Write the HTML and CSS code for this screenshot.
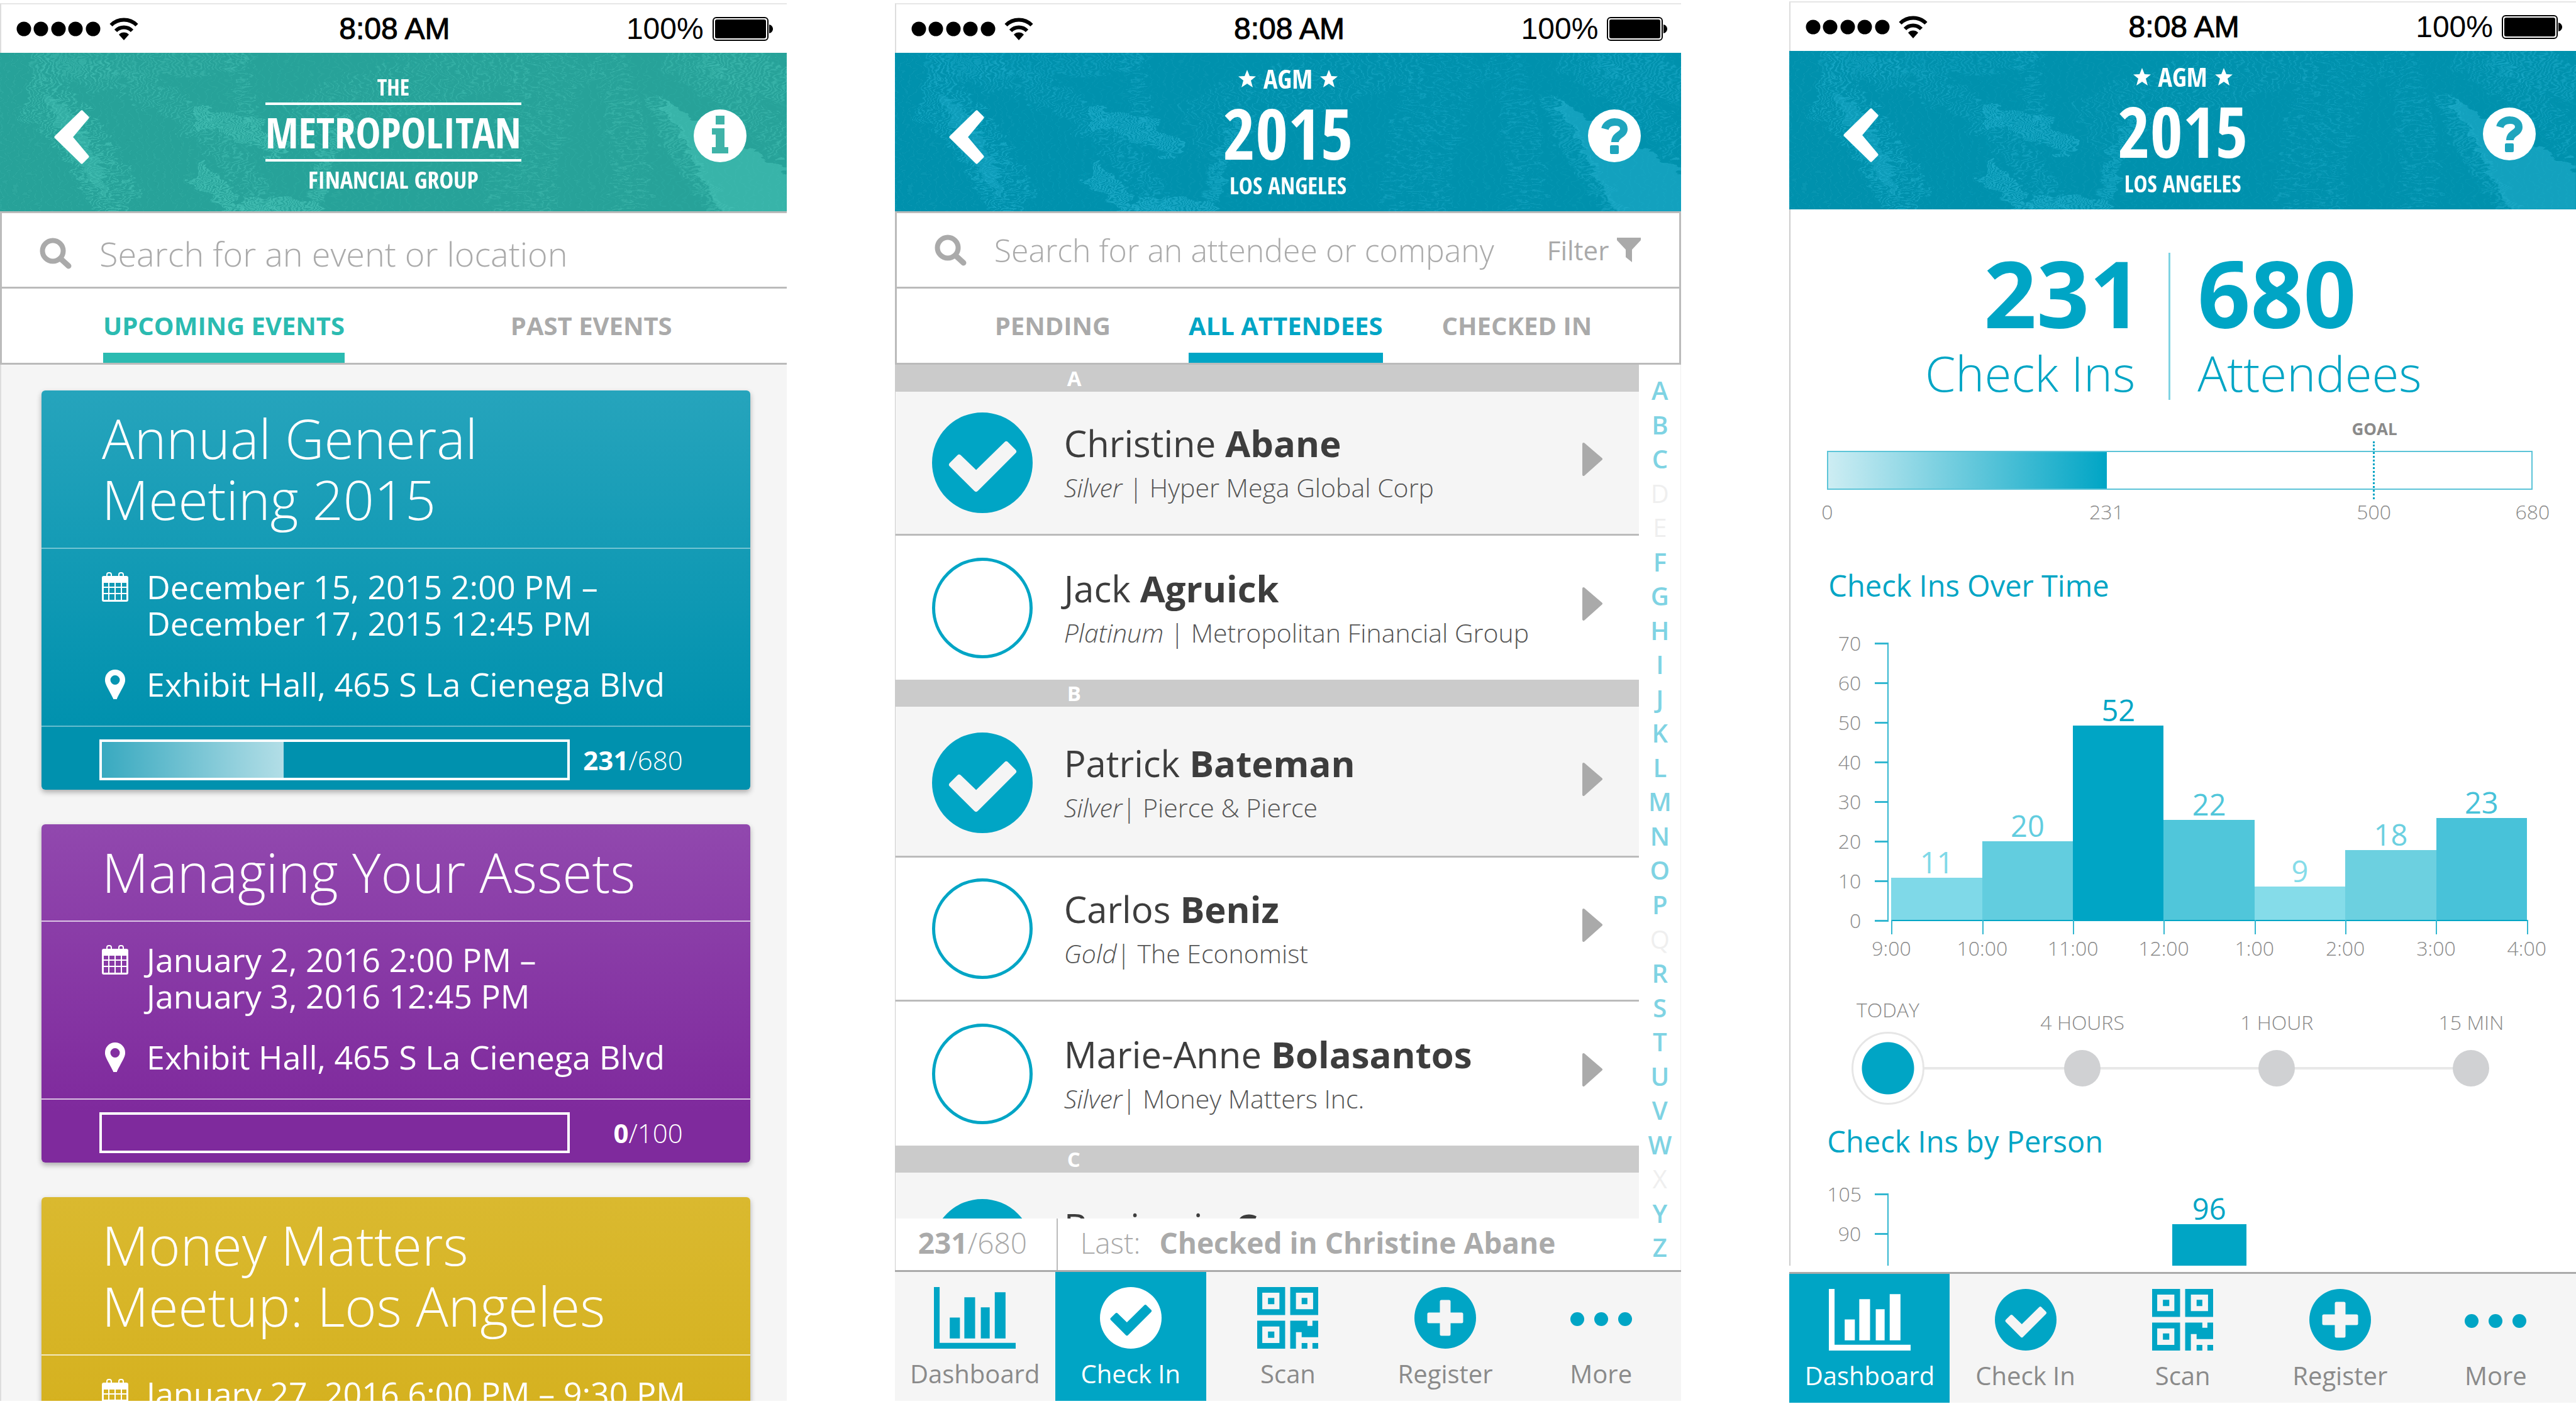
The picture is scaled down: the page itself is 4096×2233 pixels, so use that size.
FILE: index.html
```html
<!DOCTYPE html>
<html lang="en">
<head>
<meta charset="utf-8">
<title>Event check-in</title>
<link rel="stylesheet" href="styles.css">
</head>
<body>
<svg class="sprite" aria-hidden="true">
  <defs>
    <filter id="rough" x="0" y="0" width="100%" height="100%">
      <feTurbulence type="fractalNoise" baseFrequency="0.03 0.09" numOctaves="3" seed="7" result="n"/>
      <feDisplacementMap in="SourceGraphic" in2="n" scale="34" xChannelSelector="R" yChannelSelector="G"/>
    </filter>
  </defs>
  <symbol id="signal" viewBox="0 0 134 24"><circle cx="12" cy="12" r="11.5"/><circle cx="39" cy="12" r="11.5"/><circle cx="67" cy="12" r="11.5"/><circle cx="94" cy="12" r="11.5"/><circle cx="122" cy="12" r="11.5"/></symbol>
  <symbol id="wifi" viewBox="0 0 46 37"><path d="M23 37L15 28a11 11 0 0 1 16 0z"/><path d="M10 22a18 18 0 0 1 26 0" fill="none" stroke="#000" stroke-width="6"/><path d="M2.500 13a29 29 0 0 1 41 0" fill="none" stroke="#000" stroke-width="6"/></symbol>
  <symbol id="battery" viewBox="0 0 96 38"><rect x="1" y="1" width="87" height="36" rx="5" fill="none" stroke="#000" stroke-width="2"/><rect x="4" y="4" width="81" height="30" rx="3"/><path d="M90 12c8 2 8 12 0 14z"/></symbol>
  <symbol id="back" viewBox="0 0 56 86"><path d="M44 3L53 12 27 43 53 74 44 83 3 43z" fill="#fff" stroke="#fff" stroke-width="5" stroke-linejoin="round"/></symbol>
  <symbol id="star" viewBox="0 0 28 28"><path d="M14 0l4 10 10 .5-8 6.500 3 11-9-6-9 6 3-11-8-6.500L10 10z" fill="#fff"/></symbol>
  <symbol id="info" viewBox="0 0 84 84"><circle cx="42" cy="42" r="42" fill="#fff"/><path d="M35 10h14v14H35zM29 30h20v30h6v10H29V60h6V40h-6z" fill="currentColor"/></symbol>
  <symbol id="help" viewBox="0 0 84 84"><circle cx="42" cy="42" r="42" fill="#fff"/><path d="M27 31C31 16 57 17 57 31c0 10-14 9-14 21" fill="none" stroke="currentColor" stroke-width="12"/><rect x="35" y="57" width="14" height="14" rx="2" fill="currentColor"/></symbol>
  <symbol id="search" viewBox="0 0 51 50"><circle cx="21" cy="21" r="16.500" fill="none" stroke="currentColor" stroke-width="8"/><path d="M34 34L46 45" stroke="currentColor" stroke-width="9" stroke-linecap="round"/></symbol>
  <symbol id="funnel" viewBox="0 0 40 40"><path d="M1 0H39V4L25 19V39L15 31V19L1 4z" fill="currentColor"/></symbol>
  <symbol id="calendar" viewBox="0 0 42 47"><path d="M3 6h36a3 3 0 0 1 3 3v35a3 3 0 0 1-3 3H3a3 3 0 0 1-3-3V9a3 3 0 0 1 3-3zM3 17v6h7v-6zM12 17v6h8v-6zM22 17v6h8v-6zM32 17v6h7v-6zM3 25v8h7v-8zM12 25v8h8v-8zM22 25v8h8v-8zM32 25v8h7v-8zM3 35v9h7v-9zM12 35v9h8v-9zM22 35v9h8v-9zM32 35v9h7v-9z" fill="#fff" fill-rule="evenodd"/><rect x="8" y="1" width="7" height="12" rx="3" fill="none" stroke="#fff" stroke-width="2"/><rect x="27" y="1" width="7" height="12" rx="3" fill="none" stroke="#fff" stroke-width="2"/></symbol>
  <symbol id="pin" viewBox="0 0 42 47"><path d="M21 0a16 16 0 0 1 16 17c0 6-4 11-13 29a3 3 0 0 1-6 0C9 28 5 23 5 17A16 16 0 0 1 21 0zm0 9a7.500 7.500 0 1 0 0 15 7.500 7.500 0 0 0 0-15z" fill="#fff" fill-rule="evenodd"/></symbol>
  <symbol id="tick" viewBox="0 0 160 160"><path d="M31 83L43 71 70 97 118 50 130 62 70 122z" fill="currentColor" stroke="currentColor" stroke-width="8" stroke-linejoin="round"/></symbol>
  <symbol id="arrow" viewBox="0 0 32 53"><path d="M2 2L30 26 2 51z" fill="#aaa" stroke="#aaa" stroke-width="4" stroke-linejoin="round"/></symbol>
  <symbol id="bars" viewBox="0 0 129 97"><path d="M0 0h9v88h120v9H0zM25 48h16v33H25zM48 16h17v65H48zM74 32h14v49H74zM96 8h17v73H96z" fill="currentColor"/></symbol>
  <symbol id="check" viewBox="0 0 160 160"><circle cx="80" cy="80" r="80" fill="currentColor"/><path d="M31 83L43 71 70 97 118 50 130 62 70 122z" stroke-width="8" stroke-linejoin="round"/></symbol>
  <symbol id="qr" viewBox="0 0 97 97"><path d="M0 0h44v44H0zM8 9v26h27V9zM17 17h10v10H17zM52 0h44v44H52zM61 9v26h27V9zM70 17h9v10h-9zM0 53h44v44H0zM8 62v26h27V62zM17 70h10v10H17zM52 53h27v8h8v-8h9v26H70v-8h-9v26h-9zM70 88h9v9h-9zM87 88h9v9h-9z" fill="currentColor" fill-rule="evenodd"/></symbol>
  <symbol id="plus" viewBox="0 0 98 98"><circle cx="49" cy="49" r="49" fill="currentColor"/><path d="M43 23h12v20h20v12H55v20H43V55H23V43h20z" stroke-width="5" stroke-linejoin="round"/></symbol>
  <symbol id="dots" viewBox="0 0 98 98"><circle cx="11" cy="51" r="11" fill="currentColor"/><circle cx="49" cy="51" r="11" fill="currentColor"/><circle cx="87" cy="51" r="11" fill="currentColor"/></symbol>
  <symbol id="palms" viewBox="0 0 1250 252" preserveAspectRatio="none">
    <g fill="none" stroke="currentColor" filter="url(#rough)">
      <path d="M0 126H1250" stroke-width="252" stroke-dasharray="2 11" opacity=".16"/>
      <path d="M40 70Q120 90 190 250" stroke-width="80" stroke-dasharray="2 5" opacity=".55"/>
      <path d="M60 30Q220 20 330 130T420 260" stroke-width="46" stroke-dasharray="2 6" opacity=".45"/>
      <path d="M50 10Q250 40 400 0" stroke-width="40" stroke-dasharray="3 6" opacity=".35"/>
      <path d="M310 100Q390 110 450 160" stroke-width="34" stroke-dasharray="3 2" opacity=".6"/>
      <path d="M310 190Q350 210 370 252" stroke-width="34" stroke-dasharray="3 2" opacity=".65"/>
      <path d="M380 252Q430 232 510 256" stroke-width="26" stroke-dasharray="4 2" opacity=".6"/>
      <path d="M560 110Q500 160 510 240" stroke-width="26" stroke-dasharray="3 2" opacity=".5"/>
      <path d="M470 120Q600 60 830 0" stroke-width="90" stroke-dasharray="2 9" opacity=".4"/>
      <path d="M380 0Q380 60 400 110" stroke-width="30" stroke-dasharray="2 7" opacity=".4"/>
      <path d="M830 252Q820 120 900 0" stroke-width="110" stroke-dasharray="2 9" opacity=".35"/>
      <path d="M1000 252Q1010 100 960 0" stroke-width="60" stroke-dasharray="2 8" opacity=".35"/>
      <path d="M1060 10Q1140 30 1250 150" stroke-width="50" stroke-dasharray="2 6" opacity=".45"/>
      <path d="M1120 0Q1180 20 1260 60" stroke-width="60" stroke-dasharray="3 5" opacity=".45"/>
      <path d="M1040 70Q1090 190 1150 260" stroke-width="34" stroke-dasharray="3 4" opacity=".4"/>
    </g>
    <path d="M70 65Q110 80 130 120L160 180 175 235 130 190 90 110z" fill="currentColor" opacity=".35" filter="url(#rough)"/>
    <path d="M1040 60Q1080 100 1150 130T1270 200V270H1150Q1110 180 1040 60z" fill="currentColor" opacity=".5" filter="url(#rough)"/>
  </symbol>
</svg>

<main class="board">

  <section class="phone" aria-label="Events">
    <div class="status">
      <span class="status-left"><svg class="signal"><use href="#signal"/></svg><svg class="wifi"><use href="#wifi"/></svg></span>
      <span class="clock">8:08 AM</span>
      <span class="status-right">100%<svg class="battery"><use href="#battery"/></svg></span>
    </div>
    <header class="banner banner-teal">
      <svg class="texture"><use href="#palms"/></svg>
      <button class="icon-button" aria-label="Back"><svg class="back"><use href="#back"/></svg></button>
      <h1 class="brand">
        <span class="brand-the">THE</span>
        <span class="brand-name">METROPOLITAN</span>
        <span class="brand-group">FINANCIAL GROUP</span>
      </h1>
      <button class="icon-button icon-right" aria-label="Information"><svg class="round"><use href="#info"/></svg></button>
    </header>
    <div class="search search-low">
      <svg class="lens"><use href="#search"/></svg>
      <input type="search" aria-label="Search events" placeholder="Search for an event or location">
    </div>
    <nav class="tabs tabs-two">
      <button class="tab tab-on">UPCOMING EVENTS</button>
      <button class="tab">PAST EVENTS</button>
    </nav>
    <div class="events">
      <article class="card card-blue">
        <h2 class="card-title">Annual General<br>Meeting 2015</h2>
        <div class="card-body">
          <p class="fact"><svg><use href="#calendar"/></svg><span>December 15, 2015 2:00 PM –<br>December 17, 2015 12:45 PM</span></p>
          <p class="fact"><svg><use href="#pin"/></svg><span>Exhibit Hall, 465 S La Cienega Blvd</span></p>
        </div>
        <div class="card-foot">
          <div class="meter"><div class="meter-fill" style="width:39%"></div></div>
          <span class="tally"><b>231</b>/680</span>
        </div>
      </article>
      <article class="card card-purple">
        <h2 class="card-title">Managing Your Assets</h2>
        <div class="card-body">
          <p class="fact"><svg><use href="#calendar"/></svg><span>January 2, 2016 2:00 PM –<br>January 3, 2016 12:45 PM</span></p>
          <p class="fact"><svg><use href="#pin"/></svg><span>Exhibit Hall, 465 S La Cienega Blvd</span></p>
        </div>
        <div class="card-foot">
          <div class="meter"></div>
          <span class="tally"><b>0</b>/100</span>
        </div>
      </article>
      <article class="card card-gold">
        <h2 class="card-title">Money Matters<br>Meetup: Los Angeles</h2>
        <div class="card-body">
          <p class="fact"><svg><use href="#calendar"/></svg><span>January 27, 2016 6:00 PM – 9:30 PM</span></p>
        </div>
      </article>
    </div>
  </section>

  <section class="phone" aria-label="Attendees">
    <div class="status">
      <span class="status-left"><svg class="signal"><use href="#signal"/></svg><svg class="wifi"><use href="#wifi"/></svg></span>
      <span class="clock">8:08 AM</span>
      <span class="status-right">100%<svg class="battery"><use href="#battery"/></svg></span>
    </div>
    <header class="banner banner-blue">
      <svg class="texture"><use href="#palms"/></svg>
      <button class="icon-button" aria-label="Back"><svg class="back"><use href="#back"/></svg></button>
      <h1 class="brand brand-agm">
        <span class="agm-top"><svg><use href="#star"/></svg>AGM<svg><use href="#star"/></svg></span>
        <span class="agm-year">2015</span>
        <span class="agm-city">LOS ANGELES</span>
      </h1>
      <button class="icon-button icon-right" aria-label="Help"><svg class="round"><use href="#help"/></svg></button>
    </header>
    <div class="search boxed">
      <svg class="lens"><use href="#search"/></svg>
      <input type="search" aria-label="Search attendees" placeholder="Search for an attendee or company">
      <button class="filter">Filter<svg><use href="#funnel"/></svg></button>
    </div>
    <nav class="tabs tabs-three boxed">
      <button class="tab tab-first">PENDING</button>
      <button class="tab tab-on">ALL ATTENDEES</button>
      <button class="tab">CHECKED IN</button>
    </nav>
    <div class="people">
      <div class="people-main">
        <div class="people-list">
          <h2 class="letter">A</h2>
          <div class="person person-in">
            <span class="tickbox"><input type="checkbox" id="p1" checked><svg><use href="#tick"/></svg></span>
            <label for="p1"><span class="name">Christine <b>Abane</b></span><span class="role"><i>Silver</i> | Hyper Mega Global Corp</span></label>
            <svg class="arrow"><use href="#arrow"/></svg>
          </div>
          <div class="person">
            <span class="tickbox"><input type="checkbox" id="p2"></span>
            <label for="p2"><span class="name">Jack <b>Agruick</b></span><span class="role"><i>Platinum</i> | Metropolitan Financial Group</span></label>
            <svg class="arrow"><use href="#arrow"/></svg>
          </div>
          <h2 class="letter">B</h2>
          <div class="person person-in person-tall">
            <span class="tickbox"><input type="checkbox" id="p3" checked><svg><use href="#tick"/></svg></span>
            <label for="p3"><span class="name">Patrick <b>Bateman</b></span><span class="role"><i>Silver</i>| Pierce &amp; Pierce</span></label>
            <svg class="arrow"><use href="#arrow"/></svg>
          </div>
          <div class="person">
            <span class="tickbox"><input type="checkbox" id="p4"></span>
            <label for="p4"><span class="name">Carlos <b>Beniz</b></span><span class="role"><i>Gold</i>| The Economist</span></label>
            <svg class="arrow"><use href="#arrow"/></svg>
          </div>
          <div class="person">
            <span class="tickbox"><input type="checkbox" id="p5"></span>
            <label for="p5"><span class="name">Marie-Anne <b>Bolasantos</b></span><span class="role"><i>Silver</i>| Money Matters Inc.</span></label>
            <svg class="arrow"><use href="#arrow"/></svg>
          </div>
          <h2 class="letter">C</h2>
          <div class="person person-in person-cut">
            <span class="tickbox"><input type="checkbox" id="p6" checked></span>
            <label for="p6"><span class="name">Benjamin <b>Ca</b></span></label>
          </div>
        </div>
        <div class="last">
          <span class="last-count"><b>231</b>/680</span>
          <span class="last-text">Last:<b>Checked in Christine Abane</b></span>
        </div>
      </div>
      <div class="index">
        <a href="#a">A</a><a href="#b">B</a><a href="#c">C</a><a class="off" href="#d">D</a><a class="off" href="#e">E</a><a href="#f">F</a><a href="#g">G</a><a href="#h">H</a><a href="#i">I</a><a href="#j">J</a><a href="#k">K</a><a href="#l">L</a><a href="#m">M</a><a href="#n">N</a><a href="#o">O</a><a href="#p">P</a><a class="off" href="#q">Q</a><a href="#r">R</a><a href="#s">S</a><a href="#t">T</a><a href="#u">U</a><a href="#v">V</a><a href="#w">W</a><a class="off" href="#x">X</a><a href="#y">Y</a><a href="#z">Z</a>
      </div>
    </div>
    <nav class="bottom">
      <button><svg class="wide"><use href="#bars"/></svg>Dashboard</button>
      <button class="on"><svg><use href="#check"/></svg>Check In</button>
      <button><svg><use href="#qr"/></svg>Scan</button>
      <button><svg><use href="#plus"/></svg>Register</button>
      <button><svg><use href="#dots"/></svg>More</button>
    </nav>
  </section>

  <section class="phone phone-high" aria-label="Dashboard">
    <div class="status">
      <span class="status-left"><svg class="signal"><use href="#signal"/></svg><svg class="wifi"><use href="#wifi"/></svg></span>
      <span class="clock">8:08 AM</span>
      <span class="status-right">100%<svg class="battery"><use href="#battery"/></svg></span>
    </div>
    <header class="banner banner-blue">
      <svg class="texture"><use href="#palms"/></svg>
      <button class="icon-button" aria-label="Back"><svg class="back"><use href="#back"/></svg></button>
      <h1 class="brand brand-agm">
        <span class="agm-top"><svg><use href="#star"/></svg>AGM<svg><use href="#star"/></svg></span>
        <span class="agm-year">2015</span>
        <span class="agm-city">LOS ANGELES</span>
      </h1>
      <button class="icon-button icon-right" aria-label="Help"><svg class="round"><use href="#help"/></svg></button>
    </header>
    <div class="dash">
      <div class="stats">
        <p class="stat stat-left"><b>231</b><span>Check Ins</span></p>
        <p class="stat"><b>680</b><span>Attendees</span></p>
      </div>
      <div class="goal">
        <div class="goal-bar"><div class="goal-fill" style="width:39.600%"></div></div>
        <span class="goal-mark" style="left:77.500%"><b>GOAL</b></span>
        <div class="goal-scale">
          <span style="left:0%">0</span><span style="left:39.600%">231</span><span style="left:77.500%">500</span><span style="left:100%">680</span>
        </div>
      </div>
      <h2 class="dash-title">Check Ins Over Time</h2>
      <div class="chart">
        <ol class="y-axis"><li>70</li><li>60</li><li>50</li><li>40</li><li>30</li><li>20</li><li>10</li><li>0</li></ol>
        <div class="plot">
          <div class="bar tone-2" style="height:15.200%"><span>11</span></div>
          <div class="bar tone-4" style="height:28.400%"><span>20</span></div>
          <div class="bar tone-7" style="height:70%"><span>52</span></div>
          <div class="bar tone-5" style="height:36%"><span>22</span></div>
          <div class="bar tone-1" style="height:12.100%"><span>9</span></div>
          <div class="bar tone-3" style="height:25.200%"><span>18</span></div>
          <div class="bar tone-6" style="height:36.800%"><span>23</span></div>
        </div>
        <ol class="x-axis"><li>9:00</li><li>10:00</li><li>11:00</li><li>12:00</li><li>1:00</li><li>2:00</li><li>3:00</li><li>4:00</li></ol>
      </div>
      <div class="range">
        <label class="range-on">TODAY<input type="radio" name="range" checked></label>
        <label>4 HOURS<input type="radio" name="range"></label>
        <label>1 HOUR<input type="radio" name="range"></label>
        <label>15 MIN<input type="radio" name="range"></label>
      </div>
      <h2 class="dash-title dash-title-low">Check Ins by Person</h2>
      <div class="chart chart-low">
        <ol class="y-axis"><li>105</li><li>90</li><li>75</li></ol>
        <div class="plot">
          <div class="bar tone-7" style="height:69%"><span>96</span></div>
        </div>
      </div>
    </div>
    <nav class="bottom">
      <button class="on"><svg class="wide"><use href="#bars"/></svg>Dashboard</button>
      <button><svg><use href="#check"/></svg>Check In</button>
      <button><svg><use href="#qr"/></svg>Scan</button>
      <button><svg><use href="#plus"/></svg>Register</button>
      <button><svg><use href="#dots"/></svg>More</button>
    </nav>
  </section>

</main>
</body>
</html>
```
FILE: styles.css
```css
:root {
  --blue: #00a5c5;
  --grey: #aaa;
  --line: #bbb;
  --pale: #f5f5f5;
  --narrow: "Open Sans Condensed", "Liberation Sans Narrow", "Open Sans", sans-serif;
  --narrow-thin: "Liberation Sans Narrow", "Open Sans Condensed", "Open Sans", sans-serif;
}
* { box-sizing: border-box; }
html, body { height: 100%; }
body { margin: 0; background: #fff; color: #3d3d3d; font-family: "Open Sans", "Noto Sans", sans-serif; overflow: hidden; }
h1, h2, p, ol { margin: 0; padding: 0; font-weight: inherit; }
b { font-weight: 700; }
ol { list-style: none; }
button { margin: 0; padding: 0; border: 0; background: none; font: inherit; color: inherit; cursor: pointer; }
svg { display: block; flex: none; }
.sprite { position: absolute; width: 0; height: 0; }

.board { display: grid; grid-template-columns: repeat(3, minmax(0, 1fr)); column-gap: 172px; height: 100vh; }
.phone { display: flex; flex-direction: column; min-height: 0; padding: 5px 0; overflow: hidden; }
.phone-high { padding: 2px 0; }

/* status bar */
.status { flex: none; display: grid; grid-template-columns: 1fr auto 1fr; align-items: center; height: 79px; padding: 0 22px 0 24px; border-top: 2px solid #e6e6e6; border-left: 2px solid #ddd; font: 48px/60px "Liberation Sans", Arial, sans-serif; color: #000; }
.status-left, .status-right { display: flex; align-items: center; gap: 14px; }
.status-right { justify-content: flex-end; }
.signal { width: 134px; height: 24px; }
.wifi { width: 46px; height: 37px; }
.battery { width: 96px; height: 38px; }
.clock { -webkit-text-stroke: 1px #000; }

/* banner */
.banner { flex: none; position: relative; display: grid; grid-template-columns: 1fr auto 1fr; align-items: center; height: 252px; padding: 0 64px; color: #fff; }
.banner-teal { background: #27a299; }
.banner-blue { background: #0091ad; }
.texture { position: absolute; inset: 0; width: 100%; height: 100%; }
.banner-teal .texture { color: #4cc6ba; }
.banner-blue .texture { color: #25b2d0; }
.icon-button { position: relative; justify-self: start; padding: 16px 0 0 22px; }
.icon-right { justify-self: end; padding: 12px 0 0; }
.banner-teal .icon-right { color: #3fb3a8; }
.banner-blue .icon-right { color: #1fa5bd; }
.back { width: 56px; height: 86px; }
.round { width: 84px; height: 84px; }
.brand { position: relative; align-self: start; display: flex; flex-direction: column; align-items: center; padding-top: 30px; font-family: var(--narrow); white-space: nowrap; }
.brand-the { font-family: var(--narrow-thin); font-size: 36px; line-height: 49px; }
.brand-name { border: solid #fff; border-width: 4px 0; font-size: 67px; line-height: 86px; font-weight: 700; }
.brand-group { font-family: var(--narrow-thin); font-size: 38px; line-height: 56px; }
.brand-agm { padding-top: 18px; }
.agm-top { display: flex; align-items: center; gap: 12px; font-family: var(--narrow-thin); font-size: 42px; line-height: 46px; }
.agm-top svg { width: 28px; height: 28px; }
.agm-year { font-size: 112px; line-height: 125px; font-weight: 700; }
.agm-city { font-size: 37px; line-height: 44px; font-weight: 700; }

/* search and tabs */
.search { flex: none; display: flex; align-items: center; height: 123px; padding-left: 60px; border: solid var(--line); border-width: 3px 0 3px 3px; color: var(--grey); }
.search-low { padding-top: 10px; }
.lens { width: 51px; height: 50px; }
.search input { flex: 1; min-width: 0; margin: 0 0 0 44px; padding: 0; border: 0; outline: 0; background: none; font: 300 50px/70px "Open Sans", sans-serif; color: var(--grey); }
.search-low input { font-size: 54px; }
.search input::placeholder { color: var(--grey); opacity: 1; }
.filter { display: flex; align-items: center; gap: 12px; margin-right: 60px; font-size: 42px; }
.filter svg { width: 40px; height: 40px; }
.search.boxed, .tabs.boxed { border-right-width: 3px; }
.tabs { flex: none; display: flex; height: 121px; border: solid var(--line); border-width: 0 0 3px 3px; color: var(--grey); font-size: 40px; font-weight: 700; }
.tabs-two { justify-content: space-between; padding: 0 182px 0 161px; }
.tabs-three { gap: 94px; padding-left: 156px; }
.tab { border: solid transparent; border-width: 14px 0 16px; white-space: nowrap; }
.tab-first { margin-right: 30px; }
.tab-on { border-bottom-color: var(--blue); color: var(--blue); }
.tabs-two .tab-on { border-bottom-color: #2bbbb1; color: #2bbbb1; }

/* event cards */
.events { flex: 1; min-height: 0; overflow: hidden; display: flex; flex-direction: column; gap: 55px; padding: 41px 58px 0 64px; background: var(--pale); border-left: 2px solid #ddd; }
.card { flex: none; border-radius: 6px; color: #fff; box-shadow: 0 4px 8px rgba(0, 0, 0, .3); --rule: rgba(255, 255, 255, .4); }
.card-blue { background: linear-gradient(#26a4bc, #0091ae 85%); }
.card-purple { background: linear-gradient(#9148ae, #7f2a9d 85%); --rule: rgba(255, 255, 255, .7); }
.card-gold { background: linear-gradient(#dab92f, #d3ae19); --rule: rgba(255, 255, 255, .7); padding-bottom: 100px; }
.card-title { padding: 27px 92px 29px 96px; font-size: 86px; line-height: 97px; font-weight: 300; white-space: nowrap; }
.card-body { display: grid; gap: 39px; padding: 31px 0 37px 96px; border: solid var(--rule); border-width: 2px 0; }
.fact { display: flex; gap: 29px; font-size: 52px; line-height: 58px; white-space: nowrap; }
.fact svg { width: 42px; height: 47px; margin-top: 6px; }
.card-foot { display: flex; align-items: center; justify-content: space-between; padding: 20px 107px 15px 92px; }
.meter { width: 748px; height: 65px; border: 4px solid #fff; }
.meter-fill { height: 100%; background: linear-gradient(90deg, rgba(255, 255, 255, .22), rgba(255, 255, 255, .7)); }
.tally { font-size: 42px; font-weight: 300; }

/* attendee list */
.people { flex: 1; min-height: 0; display: flex; border-left: 1px solid #ccc; border-right: 1px solid #eee; }
.people-main { flex: 1; min-width: 0; display: flex; flex-direction: column; }
.people-list { flex: 1; min-height: 0; overflow: hidden; }
.letter { height: 43px; padding-left: 273px; background: #cbcbcb; color: #fff; font-size: 33px; line-height: 43px; font-weight: 700; }
.person { display: flex; align-items: center; height: 229px; padding: 0 58px; border-bottom: 3px solid var(--line); }
.person:has(+ .letter) { border-bottom: 0; }
.person-in { background: var(--pale); }
.person-tall { height: 240px; padding-top: 5px; }
.person-cut { align-items: flex-start; padding-top: 42px; }
.person-cut .name { padding-top: 8px; }
.tickbox { display: grid; flex: none; width: 160px; height: 160px; }
.tickbox > * { grid-area: 1 / 1; width: 160px; height: 160px; margin: 0; }
.tickbox input { appearance: none; border: 5px solid var(--blue); border-radius: 50%; }
.tickbox input:checked { background: var(--blue); }
.tickbox svg { position: relative; color: var(--pale); pointer-events: none; }
.person label { flex: 1; margin-left: 50px; white-space: nowrap; }
.name, .role { display: block; }
.name { font-size: 58px; line-height: 72px; }
.role { margin-top: 6px; font-size: 41px; line-height: 56px; font-weight: 300; color: #555; }
.arrow { width: 32px; height: 53px; margin-bottom: 12px; }
.last { flex: none; display: flex; height: 82px; line-height: 76px; font-size: 46px; font-weight: 300; color: var(--grey); white-space: nowrap; }
.last-count { width: 258px; padding-left: 36px; border-right: 2px solid var(--line); }
.last-text { padding-left: 36px; }
.last-text b { margin-left: 30px; }
.index { flex: none; width: 66px; display: flex; flex-direction: column; padding: 14px 0 8px; text-align: center; font-size: 40px; font-weight: 600; }
.index a { flex: 1; line-height: 54px; color: #7fd3e3; text-decoration: none; }
.index .off { color: #efefef; font-weight: 400; }

/* bottom navigation */
.bottom { flex: none; display: grid; grid-template-columns: 51fr 48fr 52fr 48fr 51fr; height: 208px; border-top: 3px solid #aaa; background: var(--pale); color: #8a8a8a; font-size: 40px; line-height: 52px; }
.bottom button { display: flex; flex-direction: column; align-items: center; gap: 14px; padding-top: 24px; }
.bottom svg { width: 98px; height: 98px; color: var(--blue); fill: var(--pale); stroke: var(--pale); }
.bottom svg.wide { width: 130px; stroke: none; }
.bottom use { stroke-width: 0; }
.bottom .on { background: var(--blue); color: #fff; }
.bottom .on svg { color: #fff; fill: var(--blue); stroke: var(--blue); }

/* dashboard */
.dash { flex: 1; min-height: 0; overflow: hidden; border-left: 2px solid #ccc; padding-left: 58px; }
.phone-high .bottom { margin-top: 10px; }
.stats { display: grid; grid-template-columns: 546px 1fr; margin-top: 69px; color: var(--blue); }
.stat b, .stat span { display: block; }
.stat b { font-size: 147px; line-height: 126px; font-weight: 700; }
.stat span { margin-top: 22px; font-size: 78px; line-height: 86px; font-weight: 300; }
.stat { padding-left: 43px; }
.stat-left { padding: 0 42px 0 0; border-right: 3px solid #7fd3e3; text-align: right; }
.stat-left span { padding-right: 11px; }
.goal { position: relative; margin: 28px 69px 0 0; padding-top: 53px; color: #8a8a8a; }
.goal-bar { height: 62px; border: 2px solid #5cc4d8; }
.goal-fill { height: 58px; background: linear-gradient(90deg, #cdedf3, var(--blue)); }
.goal-mark { position: absolute; top: 38px; height: 92px; margin-left: -2px; border-left: 3px dotted var(--blue); }
.goal-mark b { position: absolute; left: 0; bottom: 94px; font-size: 26px; line-height: 36px; transform: translateX(-50%); }
.goal-scale { position: relative; height: 57px; font-size: 32px; line-height: 44px; font-weight: 300; }
.goal-scale span { position: absolute; top: 13px; transform: translateX(-50%); }
.dash-title { margin-top: 65px; padding-left: 2px; font-size: 47px; line-height: 60px; color: var(--blue); }
.dash-title-low { margin-top: 28px; padding-left: 0; }
.chart { display: grid; grid-template-columns: 98px 1fr; column-gap: 4px; margin: 30px 78px 0 0; color: #8a8a8a; font-size: 32px; font-weight: 300; }
.chart-low { margin-top: 22px; }
.y-axis { position: relative; text-align: right; }
.y-axis li { position: relative; height: 63px; padding-right: 44px; line-height: 63px; }
.y-axis li::after { content: ""; position: absolute; right: 0; top: 31px; width: 22px; height: 3px; background: #33b7d0; }
.y-axis::before { content: ""; position: absolute; right: 0; top: 31px; bottom: 31px; width: 2px; background: #33b7d0; }
.plot { display: flex; align-items: flex-end; margin: 31px 0 30px; border-bottom: 2px solid var(--blue); }
.chart-low .y-axis::before { bottom: 0; }
.chart-low .plot { justify-content: center; margin-bottom: 0; border: 0; }
.chart-low .bar { flex: 0 0 118px; }
.bar { position: relative; flex: 1; background: var(--tone); color: var(--tone); font-size: 47px; font-weight: 400; }
.bar span { position: absolute; left: 0; right: 0; bottom: 100%; line-height: 50px; text-align: center; }
.tone-1 { --tone: #85dce9; }
.tone-2 { --tone: #7fd9e8; }
.tone-3 { --tone: #6cd0e0; }
.tone-4 { --tone: #62cddf; }
.tone-5 { --tone: #50c6da; }
.tone-6 { --tone: #48c2d9; }
.tone-7 { --tone: #00a5c5; }
.x-axis { grid-column: 2; display: flex; margin: -30px -72px 0; }
.x-axis li { position: relative; flex: 1; padding-top: 21px; line-height: 44px; text-align: center; }
.x-axis li::before { content: ""; position: absolute; left: 50%; top: -2px; width: 2px; height: 23px; background: #33b7d0; }
.range { position: relative; display: grid; grid-template-columns: repeat(4, 1fr); align-items: end; margin: 56px 12px 0 -58px; color: #8a8a8a; font-size: 32px; line-height: 40px; font-weight: 300; }
.range::before { content: ""; position: absolute; left: 12.500%; right: 12.500%; bottom: 56px; height: 4px; background: #e8e8e8; }
.range label { position: relative; display: flex; flex-direction: column; align-items: center; gap: 24px; padding-bottom: 29px; }
.range input { appearance: none; width: 58px; height: 58px; margin: 0; border-radius: 50%; background: #d0d1d3; }
.range .range-on { gap: 15px; padding-bottom: 0; }
.range input:checked { width: 116px; height: 116px; border: 3px solid #e6e6e6; background: radial-gradient(circle, var(--blue) 41px, #fff 42px); }
```
